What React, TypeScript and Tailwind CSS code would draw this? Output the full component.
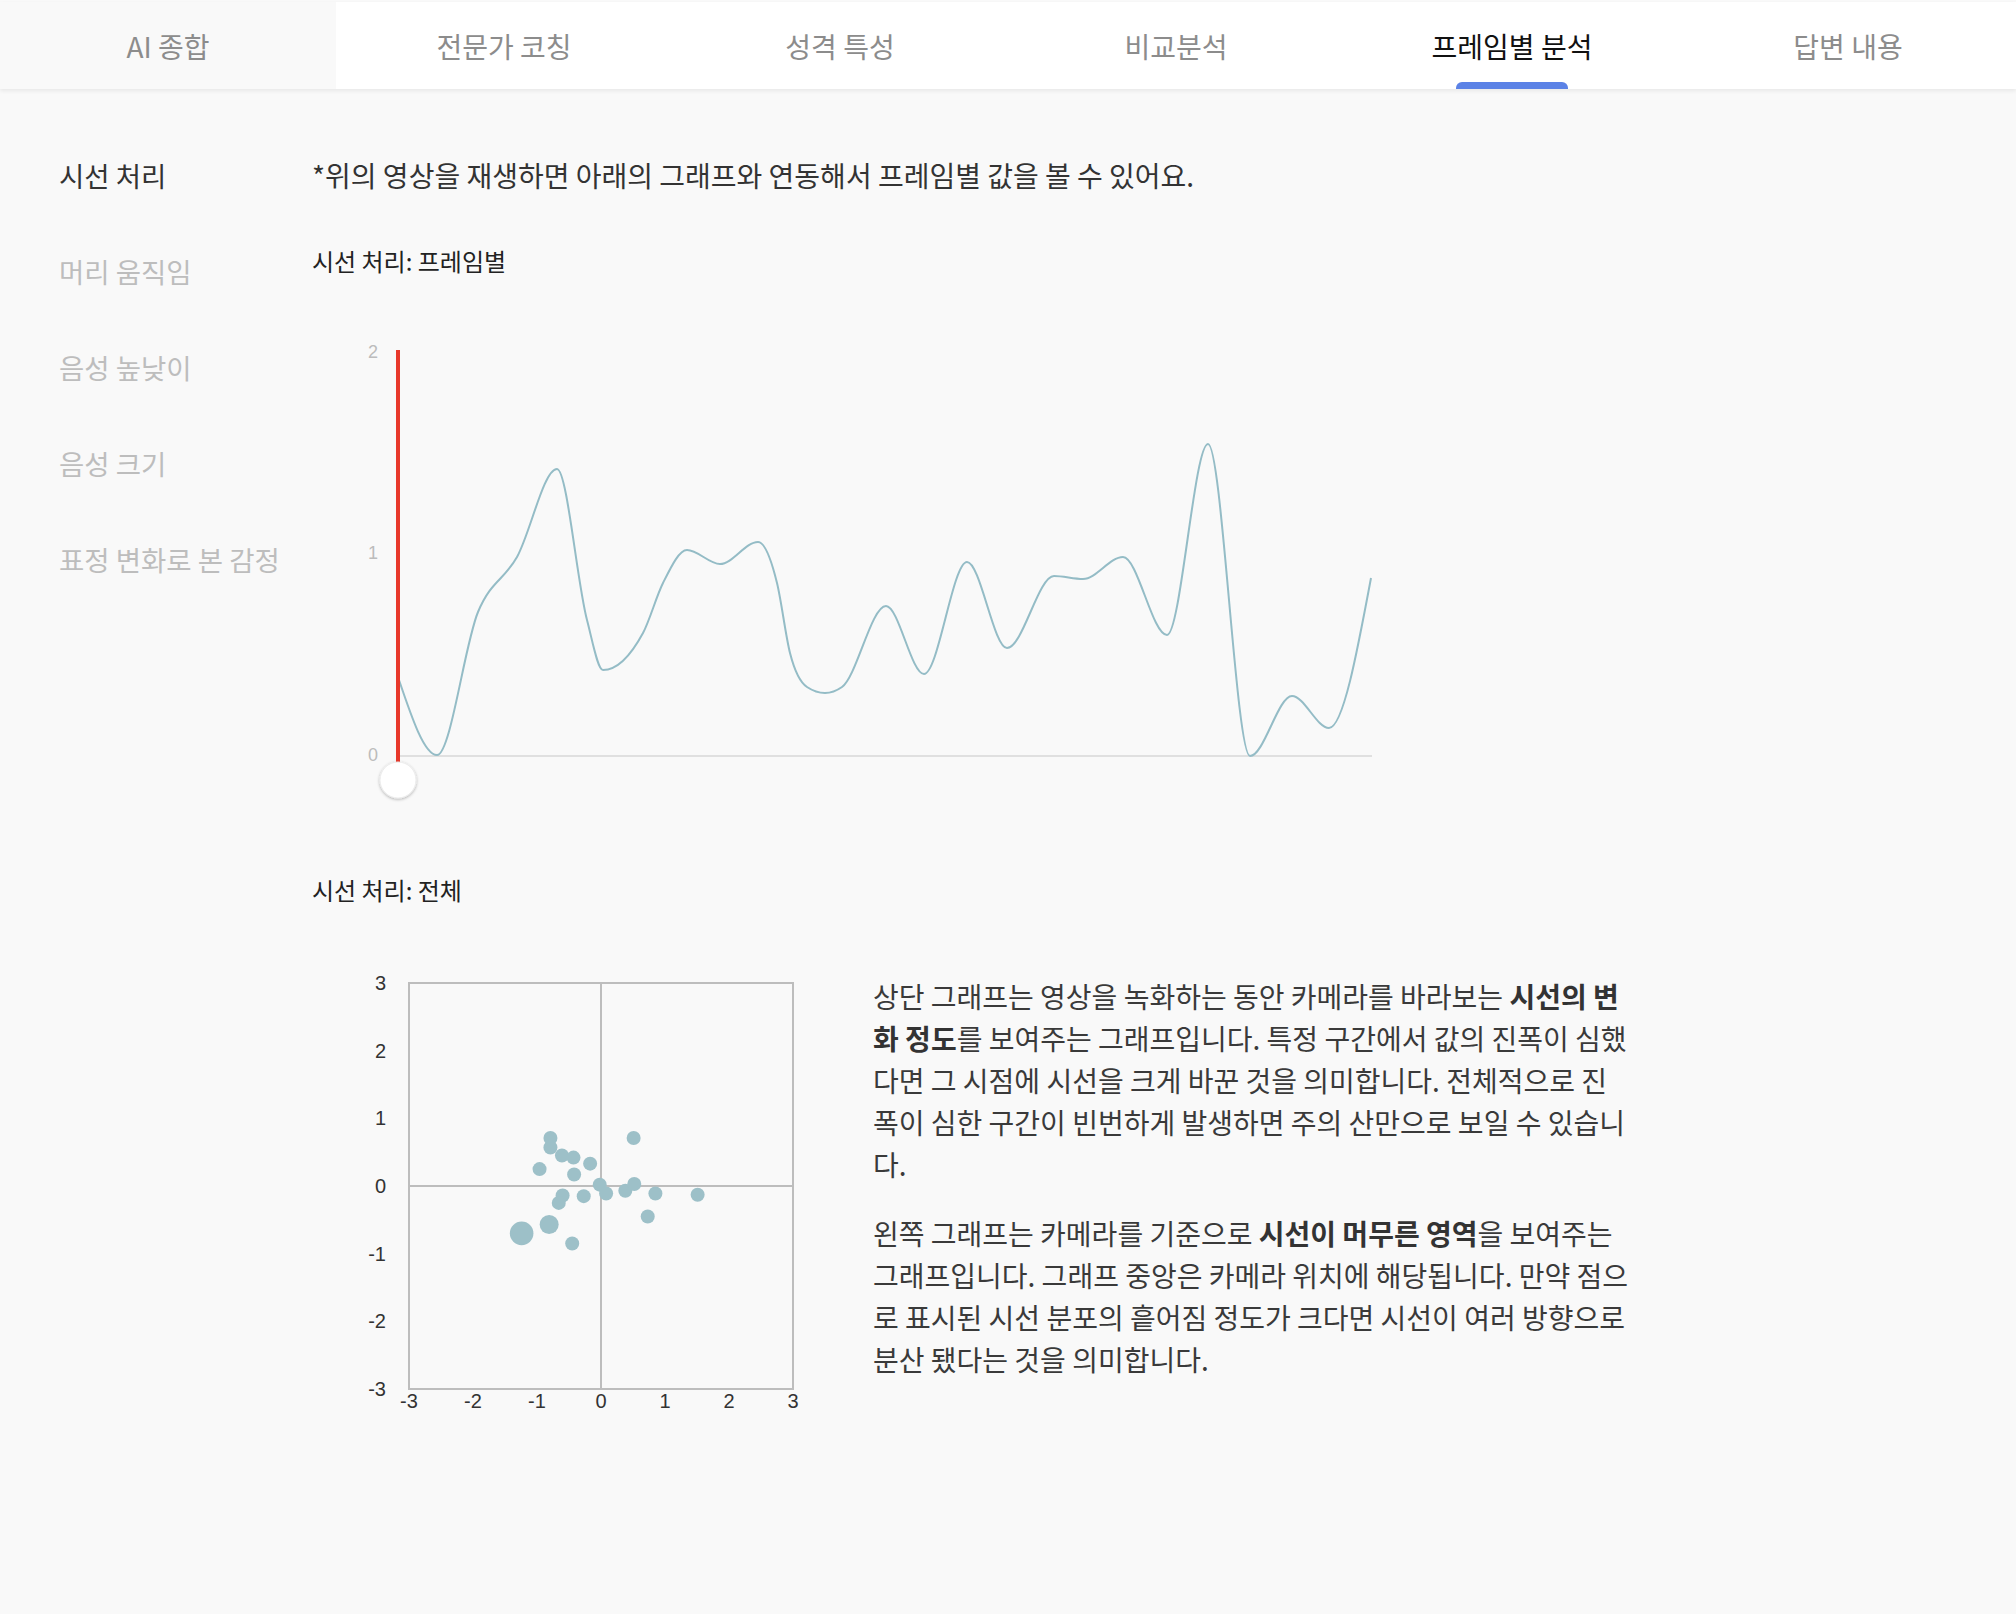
import { useMemo } from 'react'

const tabs = ['AI 종합', '전문가 코칭', '성격 특성', '비교분석', '프레임별 분석', '답변 내용']
const activeTab = 4

const menu = ['시선 처리', '머리 움직임', '음성 높낮이', '음성 크기', '표정 변화로 본 감정']

// frame values, already in page pixels (x, y)
const framePoints: Array<[number, number]> = [
  [399, 680], [437, 755], [478, 612], [517, 557], [557, 469], [587, 620],
  [603, 670], [643, 633], [663, 583], [687, 550], [720, 564], [758, 542],
  [777, 583], [790, 653], [807, 687], [825, 693], [842, 687], [886, 606],
  [924, 674], [967, 562], [1007, 648], [1054, 576], [1083, 579], [1123, 557],
  [1167, 635], [1208, 444], [1250, 756], [1292, 696], [1329, 728], [1371, 578],
]

// gaze positions: [x, y, radius]
const gazePoints: Array<[number, number, number]> = [
  [-0.79, 0.71, 7], [-0.79, 0.57, 7], [-0.61, 0.45, 7], [-0.43, 0.42, 7],
  [-0.17, 0.33, 7], [-0.96, 0.25, 7], [-0.42, 0.17, 7], [0.51, 0.71, 7],
  [-0.02, 0.02, 7], [0.08, -0.11, 7], [0.38, -0.07, 7], [0.52, 0.03, 7],
  [0.85, -0.11, 7], [1.51, -0.13, 7], [-0.6, -0.14, 7], [-0.66, -0.25, 7],
  [-0.27, -0.15, 7], [0.73, -0.45, 7], [-0.81, -0.57, 9.5], [-1.24, -0.7, 11.8],
  [-0.45, -0.85, 7],
]

function monotonePath(pts: Array<[number, number]>) {
  const n = pts.length
  const m: number[] = new Array(n).fill(0)
  const sign = (v: number) => (v < 0 ? -1 : 1)
  for (let i = 1; i < n - 1; i++) {
    const [x0, y0] = pts[i - 1]
    const [x1, y1] = pts[i]
    const [x2, y2] = pts[i + 1]
    const h0 = x1 - x0
    const h1 = x2 - x1
    const s0 = (y1 - y0) / h0
    const s1 = (y2 - y1) / h1
    const p = (s0 * h1 + s1 * h0) / (h0 + h1)
    m[i] = (sign(s0) + sign(s1)) * Math.min(Math.abs(s0), Math.abs(s1), 0.5 * Math.abs(p)) || 0
  }
  const h = pts[1][0] - pts[0][0]
  m[0] = (3 * (pts[1][1] - pts[0][1]) / h - m[1]) / 2
  const hl = pts[n - 1][0] - pts[n - 2][0]
  m[n - 1] = (3 * (pts[n - 1][1] - pts[n - 2][1]) / hl - m[n - 2]) / 2

  let d = `M${pts[0][0]},${pts[0][1]}`
  for (let i = 0; i < n - 1; i++) {
    const [x0, y0] = pts[i]
    const [x1, y1] = pts[i + 1]
    const dx = (x1 - x0) / 3
    d += ` C${x0 + dx},${y0 + dx * m[i]} ${x1 - dx},${y1 - dx * m[i + 1]} ${x1},${y1}`
  }
  return d
}

function FrameChart() {
  const path = useMemo(() => monotonePath(framePoints), [])
  return (
    <svg width={1088} height={480} viewBox="312 330 1088 480" className="block">
      <defs>
        <filter id="knobShadow" x="-50%" y="-50%" width="200%" height="200%">
          <feDropShadow dx="0" dy="1" stdDeviation="1.6" floodColor="#000" floodOpacity="0.3" />
        </filter>
      </defs>
      {[
        { v: '2', y: 352 },
        { v: '1', y: 553 },
        { v: '0', y: 755 },
      ].map((t) => (
        <text
          key={t.v}
          x={378}
          y={t.y}
          textAnchor="end"
          dominantBaseline="central"
          fontSize={18}
          fill="#bcbcbc"
          fontFamily="'Liberation Sans', Arial, sans-serif"
        >
          {t.v}
        </text>
      ))}
      <line x1={398} y1={756} x2={1372} y2={756} stroke="#e0e0e0" strokeWidth={2} />
      <path d={path} fill="none" stroke="#94bcc6" strokeWidth={2} />
      <line x1={398} y1={350} x2={398} y2={764} stroke="#e8382b" strokeWidth={4} />
      <circle cx={398} cy={780} r={18} fill="#ffffff" stroke="#ececec" strokeWidth={1} filter="url(#knobShadow)" />
    </svg>
  )
}

function GazeChart() {
  const cx = 601
  const cy = 1186
  const ux = 64
  const uy = 67.67
  const ticks = [3, 2, 1, 0, -1, -2, -3]
  return (
    <svg width={520} height={460} viewBox="312 960 520 460" className="block shrink-0">
      <rect x={409} y={983} width={384} height={406} fill="none" stroke="#bdbdbd" strokeWidth={2} />
      <line x1={cx} y1={983} x2={cx} y2={1389} stroke="#bdbdbd" strokeWidth={2} />
      <line x1={409} y1={cy} x2={793} y2={cy} stroke="#bdbdbd" strokeWidth={2} />
      {ticks.map((t) => (
        <text
          key={`y${t}`}
          x={386}
          y={cy - t * uy}
          textAnchor="end"
          dominantBaseline="central"
          fontSize={20}
          fill="#333"
          fontFamily="'Liberation Sans', Arial, sans-serif"
        >
          {t}
        </text>
      ))}
      {ticks.map((t) => (
        <text
          key={`x${t}`}
          x={cx + t * ux}
          y={1401}
          textAnchor="middle"
          dominantBaseline="central"
          fontSize={20}
          fill="#333"
          fontFamily="'Liberation Sans', Arial, sans-serif"
        >
          {t}
        </text>
      ))}
      {gazePoints.map(([x, y, r], i) => (
        <circle key={i} cx={cx + x * ux} cy={cy - y * uy} r={r} fill="#9dc0c8" />
      ))}
    </svg>
  )
}

export default function App() {
  return (
    <div className="min-h-[1614px] bg-[#f9f9f9] pt-[2px] font-['Noto_Sans_CJK_KR','Noto_Sans',sans-serif] text-[#333]">
      {/* tabs */}
      <div className="grid h-[87px] grid-cols-6 bg-white shadow-[0_2px_4px_rgba(0,0,0,0.07)]">
        {tabs.map((tab, i) => (
          <div
            key={tab}
            className={`relative flex items-center justify-center pt-[1px] text-[28px] ${
              i === 0 ? 'bg-[#f9f9f9]' : ''
            } ${i === activeTab ? 'text-[#111]' : 'text-[#8c8c8c]'}`}
          >
            {tab}
            {i === activeTab && (
              <span className="absolute bottom-0 left-1/2 h-[7px] w-[112px] -translate-x-1/2 rounded-t-md bg-[#5b82e6]" />
            )}
          </div>
        ))}
      </div>

      <div className="flex pt-[68px] pl-[59px]">
        {/* sidebar */}
        <div className="flex w-[253px] shrink-0 flex-col gap-[60px]">
          {menu.map((item, i) => (
            <div
              key={item}
              className={`text-[27.5px] leading-[36px] whitespace-nowrap ${
                i === 0 ? 'text-[#333]' : 'text-[#bdbdbd]'
              }`}
            >
              {item}
            </div>
          ))}
        </div>

        {/* content */}
        <div className="flex flex-col">
          <p className="text-[28px] leading-[36px] text-[#333] whitespace-nowrap">
            *위의 영상을 재생하면 아래의 그래프와 연동해서 프레임별 값을 볼 수 있어요.
          </p>
          <h3 className="mt-[52px] text-[24px] leading-[32px] text-[#222]">시선 처리: 프레임별</h3>
          <div className="mt-[53px]">
            <FrameChart />
          </div>

          <h3 className="mt-[64px] text-[24px] leading-[32px] text-[#222]">시선 처리: 전체</h3>
          <div className="mt-[54px] flex items-start">
            <GazeChart />
            <div className="mt-[15px] ml-[41px] text-[28px] leading-[42px] text-[#3a3a3a] whitespace-nowrap">
              <p>
                <span className="block">
                  상단 그래프는 영상을 녹화하는 동안 카메라를 바라보는 <b className="font-bold text-[#333]">시선의 변</b>
                </span>
                <span className="block">
                  <b className="font-bold text-[#333]">화 정도</b>를 보여주는 그래프입니다. 특정 구간에서 값의 진폭이 심했
                </span>
                <span className="block">다면 그 시점에 시선을 크게 바꾼 것을 의미합니다. 전체적으로 진</span>
                <span className="block">폭이 심한 구간이 빈번하게 발생하면 주의 산만으로 보일 수 있습니</span>
                <span className="block">다.</span>
              </p>
              <p className="mt-[27px]">
                <span className="block">
                  왼쪽 그래프는 카메라를 기준으로 <b className="font-bold text-[#333]">시선이 머무른 영역</b>을 보여주는
                </span>
                <span className="block">그래프입니다. 그래프 중앙은 카메라 위치에 해당됩니다. 만약 점으</span>
                <span className="block">로 표시된 시선 분포의 흩어짐 정도가 크다면 시선이 여러 방향으로</span>
                <span className="block">분산 됐다는 것을 의미합니다.</span>
              </p>
            </div>
          </div>
        </div>
      </div>
    </div>
  )
}
